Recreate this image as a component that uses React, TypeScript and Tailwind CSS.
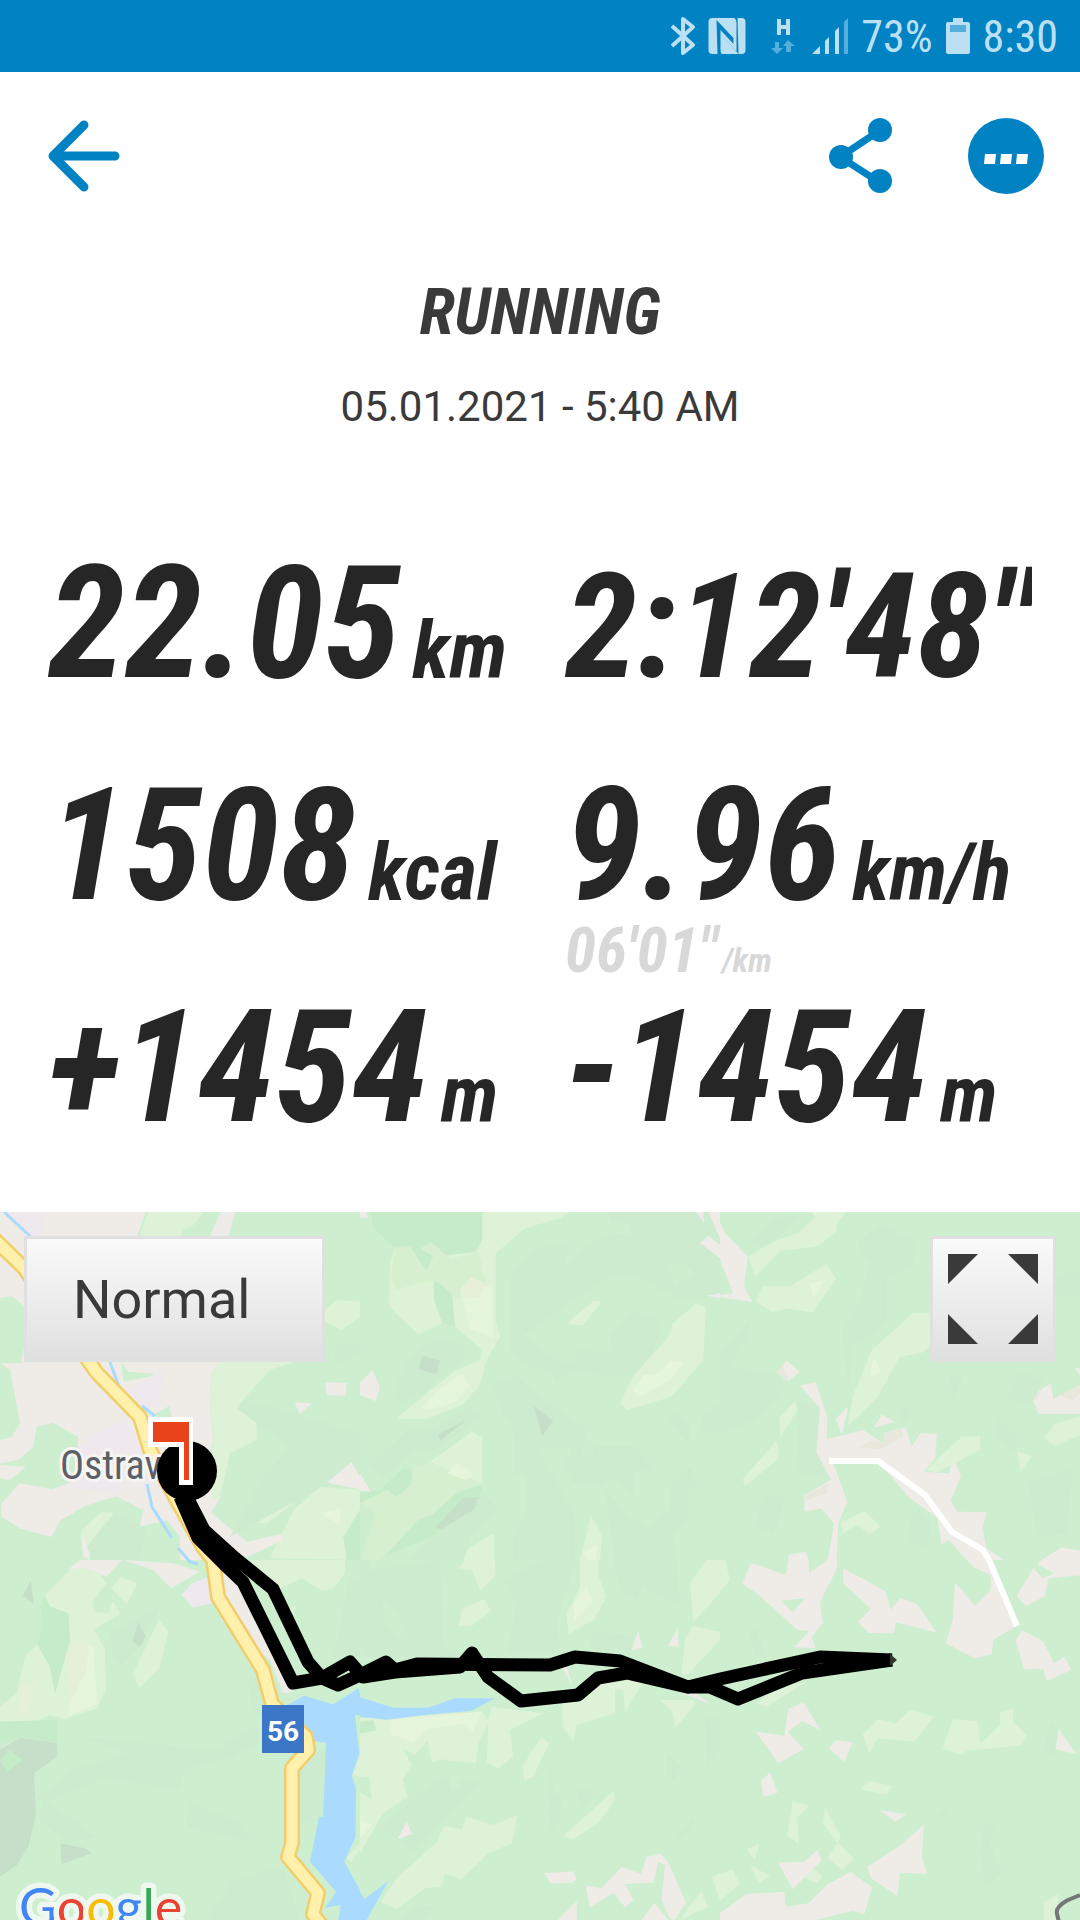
import React from "react";

interface Stat {
  id: string;
  value: string;
  unit?: string;
  small?: boolean;
  pace?: string;
}

const stats: Stat[] = [
  { id: "distance", value: "22.05", unit: "km" },
  { id: "duration", value: "2:12'48\"", small: true },
  { id: "energy", value: "1508", unit: "kcal" },
  { id: "speed", value: "9.96", unit: "km/h", pace: "06'01\"" },
  { id: "ascent", value: "+1454", unit: "m" },
  { id: "descent", value: "-1454", unit: "m" },
];

// Terrain colours of the map tiles
const LIGHT = "#ddf2d6";
const PALE = "#e5f6dd";
const MID = "#d5efcf";
const SHADE = "#cdebce";
const DEEP = "#c5dfc8";
const MINT = "#c6ebc9";
const TOWN = "#efebe7";
const LILAC = "#efe9ee";
const SAND = "#e7e7dc";
const CREAM = "#e6f0d6";
const WATER = "#abdaff";
const WOOD = "#cdefd0";

interface Tile {
  x: number;
  y: number;
  shapes: [string, string][];
}

// Every tile is 1080 units wide and drawn at a third of its size
const tiles: Tile[] = [
  {
    x: 0,
    y: -12,
    shapes: [
      [TOWN, "0,30 440,30 410,110 410,480 660,486 635,520 628,600 640,720 630,760 660,890 560,1080 0,1080"],
      [LIGHT, "445,30 620,30 590,75 550,90 545,110 420,110"],
      [WOOD, "618,30 665,30 630,110 545,110 550,90 580,75"],
      [TOWN, "665,30 708,30 684,110 630,110"],
      [LILAC, "0,36 140,36 125,108 95,110 10,40"],
      [WOOD, "0,295 35,288 75,320 75,430 62,490 0,490"],
      [WOOD, "0,488 30,510 60,670 35,710 0,720"],
      [LIGHT, "975,330 1010,300 1080,305 1080,350 1025,390 975,365"],
      [LIGHT, "660,486 880,486 810,510 710,620 770,660 770,720 690,760 660,890 635,900 635,780 640,700 628,600 635,520"],
      [WOOD, "365,486 385,515 480,523 370,545"],
      [LILAC, "380,570 500,500 470,620 430,620"],
      [LILAC, "225,745 370,655 430,750 340,900 310,935 295,915 350,880 215,865"],
      [WOOD, "435,660 508,618 515,655 470,690"],
      [TOWN, "975,547 1040,549 1037,588 980,585"],
      [TOWN, "884,607 937,610 898,642"],
      [WOOD, "0,790 55,780 100,740 110,680 160,668 235,712 230,760 260,830 150,870 60,850 5,910 5,950 60,985 155,1010 180,960 250,920 310,900 350,890 430,930 420,980 500,960 540,1010 540,1080 0,1080"],
      [TOWN, "0,795 78,800 30,840 0,835"],
      [TOWN, "5,910 60,850 155,868 250,900 220,940 180,960 155,1010 60,985 5,950"],
      [TOWN, "243,1000 265,1010 270,1080 250,1070"],
      [LIGHT, "245,990 305,935 343,940 260,1040"],
      [SHADE, "260,1040 343,940 440,985 420,1080 280,1080"],
      [TOWN, "520,900 585,900 760,1040 720,1080 560,1080"],
      [LIGHT, "760,967 870,885 878,912 800,970"],
      [SHADE, "710,625 735,600 1080,700 1080,820 930,880 690,1010 790,830 870,740"],
      [LIGHT, "810,1075 880,930 960,860 1080,870 1080,1080"],
      [PALE, "958,940 1022,925 1017,972"],
      [MINT, "1080,930 1030,1010 1040,1080 1080,1080"],
      [TOWN, "700,1035 840,1003 850,1020 740,1072"],
      [TOWN, "980,848 1055,785 1080,830 1080,868"],
      [SHADE, "1005,435 1080,428 1080,470 1005,490"],
    ],
  },
  {
    x: 360,
    y: -12,
    shapes: [
      [MINT, "30,30 370,30 365,120 340,160 270,178 205,215 90,130 40,80"],
      [SHADE, "750,30 1080,30 1080,285 960,300 830,230 750,230 630,310 490,405 590,480 640,490 650,445 755,460 750,400 825,330 910,370 860,520 740,530 640,510 585,550 580,515 490,495 450,450 450,240 465,205 520,150 600,125 630,130 610,200 735,100 815,105 810,70 750,65"],
      [LIGHT, "367,30 645,30 600,55 495,85 407,160 407,360 420,410 380,480 357,560 305,615 205,656 108,656 280,515 360,480 367,450 285,380 275,280 220,240 222,300 248,370 175,403 88,320 90,185 107,140 150,140 200,215 220,170 350,155 367,120"],
      [MID, "107,140 150,140 200,215 220,170 182,145 213,125 272,177 355,155 378,250 335,232 300,265 305,295 275,290 220,245 175,250 107,270 93,220"],
      [MINT, "222,240 275,280 285,380 248,370 222,300"],
      [PALE, "300,265 395,260 400,415 328,385 310,310"],
      [CREAM, "300,265 335,230 372,252 360,290 305,297"],
      [PALE, "183,627 240,565 308,520 328,555 290,605 205,630"],
      [SHADE, "95,585 150,470 225,415 310,435 310,475 190,580 120,610"],
      [DEEP, "188,468 240,482 230,522 175,508"],
      [SHADE, "25,800 150,685 210,690 330,620 375,648 220,750 160,755 70,830"],
      [DEEP, "235,702 315,662 240,722"],
      [TOWN, "0,550 37,510 60,560 47,604 0,585"],
      [TOWN, "0,820 33,876 0,872"],
      [LIGHT, "210,785 335,695 367,712 367,852 270,820"],
      [MINT, "0,880 60,870 130,805 155,805 155,850 110,892 80,870 0,910"],
      [MID, "0,910 80,870 110,892 155,850 157,805 210,785 370,852 300,870 215,945 175,960 60,1080 0,1080 47,940"],
      [PALE, "262,820 293,787 342,825 318,840"],
      [MINT, "75,1070 175,960 215,945 290,880 367,852 355,910 340,935 240,1000 140,1040"],
      [DEEP, "225,985 310,895 355,890 340,930 245,988"],
      [SHADE, "140,1080 240,990 340,930 370,880 415,930 330,1010 310,1080"],
      [LIGHT, "310,1080 325,1045 402,1000 402,1080"],
      [SHADE, "395,555 465,525 530,580 680,690 660,780 625,740 530,740 600,860 645,950 645,1080 460,1080 460,1010 500,930 500,830 465,820 460,680 430,650"],
      [DEEP, "522,618 580,662 547,708"],
      [LIGHT, "620,370 700,303 725,305 668,377"],
      [LIGHT, "780,608 820,528 925,410 938,370 1010,310 1037,322 1030,480 935,590 800,630"],
      [PALE, "818,570 850,525 890,522 932,483 972,485 932,540 840,590"],
      [WOOD, "922,197 975,190 1007,225 945,255"],
      [SHADE, "610,800 640,745 700,775 700,738 790,738 830,740 880,805 820,820 820,885 745,830 735,855 640,850"],
      [SHADE, "735,870 800,940 860,985 930,930 930,860 990,800 1015,850 980,880 985,950 940,1010 950,1080 765,1080"],
      [SHADE, "925,665 950,635 990,680 985,730"],
      [SHADE, "1020,690 1030,640 1080,610 1080,700"],
      [LIGHT, "660,1080 693,948 726,1005 720,1080"],
      [PALE, "670,1060 712,1032 708,1080 680,1080"],
      [TOWN, "0,36 18,36 25,54 0,52"],
      [TOWN, "1008,36 1030,36 1032,68"],
      [TOWN, "1045,36 1080,36 1080,115"],
      [TOWN, "1020,130 1045,107 1080,135 1080,175"],
      [TOWN, "1040,287 1080,280 1080,295"],
    ],
  },
  {
    x: 720,
    y: -12,
    shapes: [
      [SHADE, "90,125 160,60 220,40 240,55 190,100 120,140"],
      [SHADE, "410,130 480,70 590,130 580,190 500,240 500,370 400,440 385,560 365,400 420,300 450,190"],
      [LIGHT, "273,36 380,36 350,70 350,95 295,138 180,153 105,232 85,168 160,125 235,98 285,52"],
      [TOWN, "0,65 12,95 83,170 72,260 97,306 0,292 0,285 40,280 0,180"],
      [LIGHT, "108,303 130,258 208,260 318,192 350,237 275,338 205,325 155,337"],
      [PALE, "270,252 317,238 280,293"],
      [LIGHT, "382,680 400,585 455,450 580,338 640,338 640,430 610,457 540,470 470,595"],
      [PALE, "462,470 482,515 448,534"],
      [SHADE, "0,460 90,360 85,410 30,500 160,520 180,600 100,660 0,700"],
      [SHADE, "235,600 300,615 300,760 330,840 230,820"],
      [TOWN, "170,515 200,482 240,515 202,545"],
      [SAND, "170,515 185,495 205,530 202,545"],
      [TOWN, "240,557 287,547 322,650 320,718 430,690 490,730 495,698 558,682 575,740 602,698 651,703 645,775 612,815 687,820 698,765 723,830 692,900 712,935 800,936 787,985 800,1045 850,1080 740,1080 687,1020 665,1033 652,955 565,890 480,790 340,790 382,905 355,970 350,1080 323,1080 342,970 303,925 253,935 253,885 333,840 289,757 300,625"],
      [SAND, "415,742 460,720 488,730 498,698 548,685 548,712 480,748"],
      [SAND, "255,887 325,850 322,878 258,902"],
      [TOWN, "348,655 385,620 365,705"],
      [TOWN, "463,683 485,643 523,665"],
      [LIGHT, "615,812 725,710 780,708 780,750 650,817"],
      [LIGHT, "178,655 224,603 231,632 182,707"],
      [LIGHT, "68,838 170,722 178,775 75,858"],
      [LIGHT, "892,755 935,768 902,814"],
      [LIGHT, "365,965 435,933 482,980 450,1002 410,975 368,1000"],
      [LIGHT, "972,715 1005,670 1080,650 1080,705 1005,737"],
      [TOWN, "932,587 993,550 1000,597 1080,555 1080,642 957,642"],
      [SAND, "935,590 968,565 950,603"],
      [SAND, "1020,588 1080,555 1080,580 1058,603"],
      [TOWN, "1063,503 1080,505 1080,525"],
      [TOWN, "965,1080 1025,1042 1080,1052 1080,1080"],
      [TOWN, "205,1065 258,1055 265,1080 205,1080"],
      [SHADE, "860,590 900,515 970,540 930,620"],
      [SHADE, "828,650 890,710 885,765 830,720"],
      [SHADE, "925,850 1060,800 1040,1000 950,1010"],
      [SHADE, "685,522 728,530 703,600"],
      [SHADE, "570,950 600,930 635,970 620,1050 565,1020"],
      [SHADE, "125,890 200,885 160,1010 110,970"],
      [SHADE, "540,650 555,620 580,638 550,668"],
      [SHADE, "985,240 1050,210 1080,220 1080,290 1010,285"],
    ],
  },
  {
    x: 0,
    y: 348,
    shapes: [
      [LIGHT, "133,105 230,10 280,20 320,70 280,120 280,155 325,160 340,122 360,162 283,207 315,270 318,390 290,445 195,478 150,465 100,490 0,485 0,440 50,400 75,290 112,253 150,320 165,400 210,240 205,160 150,140"],
      [PALE, "235,240 280,260 292,430 205,468 210,360 190,285"],
      [CREAM, "190,285 235,240 265,250 260,330 205,440 210,360"],
      [CREAM, "55,460 60,380 103,365 85,465"],
      [MINT, "120,140 133,110 150,140 205,160 210,240 165,400 150,320 112,253 130,200"],
      [TOWN, "205,28 240,0 365,0 320,50 260,25"],
      [TOWN, "370,0 520,10 600,35 513,85 460,30"],
      [LILAC, "545,105 575,70 625,52 640,130 578,142"],
      [LIGHT, "333,85 362,52 412,70 380,133"],
      [SHADE, "340,300 330,220 480,140 420,260 365,315"],
      [LIGHT, "398,342 478,178 505,215 478,325 418,385"],
      [DEEP, "415,185 437,230 418,262 398,240"],
      [DEEP, "68,108 92,62 102,133"],
      [TOWN, "650,0 750,60 878,395 850,400 810,300 665,180"],
      [LIGHT, "755,0 1035,0 1035,40 1000,85 965,92 905,55 840,85 760,40"],
      [LIGHT, "850,150 893,137 870,170"],
      [SHADE, "1045,50 1080,60 1080,290 990,300 1020,210"],
      [SHADE, "745,350 775,350 790,470 760,460 750,410"],
      [MINT, "0,485 170,480 170,560 60,530 0,600"],
      [SHADE, "0,545 60,530 175,545 175,590 100,640 108,800 60,910 0,950"],
      [DEEP, "0,570 60,533 170,550 170,590 102,640 108,760 85,860 50,915 0,950"],
      [MINT, "0,600 30,570 67,600 20,638"],
      [SHADE, "245,530 640,570 770,500 780,540 700,590 550,630 540,690 320,655 150,720 100,720 220,630 380,580"],
      [SHADE, "135,715 280,830 200,850 110,770"],
      [SHADE, "565,720 720,790 750,845 560,800"],
      [DEEP, "182,850 255,865 275,880 185,912"],
      [SHADE, "700,960 850,920 900,1080 620,1080"],
      [SHADE, "900,620 1000,540 980,780 900,790"],
      [WATER, "845,445 912,407 1000,433 1075,385 1080,400 1080,465 1065,465 1078,580 1055,648 1068,685 1067,830 1033,905 1080,990 1080,1080 1015,1080 1022,1035 975,1043 1008,995 930,905 957,770 970,770 978,548 915,540 905,450"],
      [LIGHT, "1080,590 1058,645 1080,650"],
      [LIGHT, "1080,850 1040,895 1055,905 1080,870"],
    ],
  },
  {
    x: 360,
    y: 348,
    shapes: [
      [SHADE, "30,30 240,0 250,260 330,290 20,290 0,250 0,0 30,0"],
      [SHADE, "430,60 550,0 650,0 590,180 600,280 440,280 470,130"],
      [SHADE, "760,0 950,0 960,140 850,80 830,120 780,100"],
      [SHADE, "700,215 820,225 810,285 690,265"],
      [WOOD, "68,100 150,220 130,250 70,180"],
      [LIGHT, "295,25 315,0 405,0 407,48 362,92 335,30"],
      [LIGHT, "295,198 308,145 373,118 393,153 335,198"],
      [LIGHT, "660,0 715,0 715,45 739,110 703,178 625,224 620,160 660,85"],
      [PALE, "680,80 699,125 642,182 642,132"],
      [LIGHT, "990,70 1040,0 1080,0 1080,100 1000,185"],
      [LIGHT, "998,198 1080,215 1080,240 980,347 965,340 975,240"],
      [TOWN, "833,212 848,262 815,272"],
      [TOWN, "953,203 955,260 925,257"],
      [TOWN, "605,320 620,320 638,378"],
      [TOWN, "965,400 1005,398 1052,433"],
      [LIGHT, "607,430 690,370 860,350 795,455 790,390 765,390 765,460 650,495 640,543 607,498"],
      [LIGHT, "900,420 1005,420 1000,440 947,503 937,455"],
      [LIGHT, "0,475 365,455 385,480 395,440 550,460 448,510 460,590 415,625 380,605 385,490 355,550 348,610 240,598 215,608 203,540 165,585 127,563 155,615 128,658 142,712 68,760 0,880"],
      [PALE, "90,480 365,455 338,515 308,492 200,507 160,545 88,522"],
      [PALE, "0,780 37,792 0,835"],
      [WOOD, "0,650 28,650 35,720 0,695"],
      [MINT, "0,485 40,480 48,512 0,520"],
      [WATER, "0,412 100,443 205,443 285,415 405,415 335,452 195,465 80,479 0,470"],
      [LIGHT, "487,618 545,530 567,550 520,650 493,662"],
      [SHADE, "65,800 230,655 270,650 270,690 300,685 300,655 365,670 290,740 180,860 150,870"],
      [TOWN, "113,837 140,785 158,822"],
      [LIGHT, "62,1025 110,955 228,848 252,797 305,808 320,770 400,795 473,765 455,850 385,880 305,957 255,943 243,980 195,985 108,1048"],
      [WATER, "0,995 12,1018 85,963 20,1080 0,1080"],
      [SHADE, "120,1080 170,1035 225,1040 190,1080"],
      [SHADE, "567,610 585,700 607,710 600,780 585,820 568,810"],
      [SHADE, "648,685 708,690 665,755"],
      [LIGHT, "608,830 760,692 766,720 720,785 640,838"],
      [SHADE, "922,580 963,620 945,662 922,650"],
      [SHADE, "1035,465 1080,480 1080,560 1040,635"],
      [SHADE, "945,830 998,778 1000,800 960,840"],
      [TOWN, "553,940 640,934 650,958 635,968 575,971"],
      [TOWN, "677,977 725,985 785,920 843,942 860,890 903,882 925,908 978,1027 945,1080 930,1075 905,1020 915,915 895,905 880,968 795,972 820,1020 795,1042 760,998 690,1042"],
      [TOWN, "593,1080 650,1023 650,1080"],
      [TOWN, "845,1080 883,1028 925,1080"],
      [LIGHT, "965,1080 985,1040 1025,995 1045,1042 1000,1060"],
      [LIGHT, "1055,950 1080,940 1080,1020"],
    ],
  },
  {
    x: 720,
    y: 348,
    shapes: [
      [LIGHT, "0,0 15,0 30,60 0,95"],
      [TOWN, "67,72 93,8 197,45 205,0 265,0 268,40 320,0 352,0 350,28 300,125 309,190 275,230 287,265 222,262 268,212 232,210 115,103"],
      [WOOD, "180,122 254,115 220,157"],
      [TOWN, "369,25 495,92 513,150 540,113 592,133 650,218 527,187 522,220 445,219 413,185 453,147 370,70"],
      [TOWN, "740,0 800,0 885,200 820,240 815,283 765,295 677,250 699,178 705,67 765,137 812,90 812,45 760,20"],
      [TOWN, "890,108 940,25 968,55 1003,40 952,12 965,0 1080,0 1080,46 985,55 975,108 918,138"],
      [TOWN, "887,240 907,210 970,245 1002,310 1033,290 1054,330 980,363 970,327 912,328"],
      [LIGHT, "112,430 180,375 255,368 140,440"],
      [TOWN, "205,448 250,427 302,511 246,483 203,515 251,567 175,610 107,515 193,527"],
      [TOWN, "326,564 347,540 397,547 374,605"],
      [TOWN, "123,660 150,638 173,698 130,711"],
      [LIGHT, "428,523 475,478 528,490 570,450 642,470 583,545 472,535 448,582"],
      [LIGHT, "667,565 700,478 772,483 782,550 840,495 840,458 879,445 880,485 920,525 900,557 740,572 725,584"],
      [TOWN, "1016,508 1070,583 1007,568"],
      [SHADE, "965,570 997,485 1012,505 1003,585"],
      [LIGHT, "422,688 448,662 515,678 500,704"],
      [TOWN, "480,751 559,762 527,786"],
      [LIGHT, "217,724 268,737 231,775 237,850 202,828"],
      [LIGHT, "315,743 362,830 355,850 402,895 368,930 322,895 352,848 308,790"],
      [LIGHT, "82,868 118,850 104,902"],
      [LIGHT, "90,915 150,948 117,970"],
      [LIGHT, "252,952 280,925 308,950 290,970"],
      [LIGHT, "0,942 38,928 58,972 0,1022"],
      [TOWN, "175,908 252,905 292,870 305,902 218,988"],
      [TOWN, "442,920 535,860 612,793 605,890 622,942 540,938 532,1008 453,955"],
      [TOWN, "0,1060 78,1003 193,995 197,1040 265,1030 323,973 392,936 456,982 433,1063 400,1052 285,1080 0,1080"],
      [LIGHT, "972,1025 1015,1003 1010,1080 972,1080"],
      [SHADE, "790,800 830,785 810,850 848,935 795,990 782,870"],
      [SHADE, "657,765 693,725 677,778"],
      [SHADE, "85,220 105,205 137,285 110,300"],
    ],
  },
];

const road =
  "-8,25 24,56 90,151 97,161 140,205 150,238 175,285 203,335 213,348 218,385 263,458 272,492 306,525 308,538 292,556 292,631 288,645 318,681 313,702 322,714";
const trackOut =
  "187,285 204,318 235,346 273,377 308,450 322,466 338,473 360,463 386,450 395,458 417,452 550,453 575,445 620,449 688,475 720,467 820,445 892,448";
const trackBack =
  "180,285 198,326 224,352 243,370 293,471 322,466 350,450 363,465 395,460 460,455 472,441 488,465 521,489 578,483 598,466 627,461 687,475 710,475 738,487 802,461 892,448";

function StatusBar() {
  return (
    <div className="h-[72px] bg-[#0082c3] text-[#bce0f3] flex items-center justify-end gap-[13px] pl-6 pr-[22px] font-['Roboto_Condensed','Liberation_Sans_Narrow',sans-serif]">
      {/* Bluetooth */}
      <svg className="w-6 h-10" viewBox="0 0 24 40" fill="none" stroke="currentColor" strokeWidth="4" strokeLinejoin="round">
        <path d="M1 10 L22 29 L12 37 V3 L22 11 L1 30" />
      </svg>
      {/* NFC */}
      <svg className="w-[38px] h-9" viewBox="0 0 37 36">
        <rect width="37" height="36" rx="4" fill="currentColor" />
        <path d="M8 2 L25 20 V26 L12 12 V31 Q12 34 13 36 H9 Z M12 15 L28 34 V5 Q28 2 26 0 H29 L30 36 Z" fill="#0082c3" />
      </svg>
      <svg className="w-6 h-9 ml-3 mr-1" viewBox="0 0 24 36">
        <path d="M6 1 H10 V7 H15 V1 H19 V17 H15 V11 H10 V17 H6 Z" fill="currentColor" />
        <path d="M4 24 H8 V30 H12 L6 36 L0 30 H4 Z M15 34 H20 V28 H24 L17 22 L12 28 H15 Z" fill="#54afdc" />
      </svg>
      {/* Signal */}
      <svg className="w-9 h-9" viewBox="0 0 36 36" fill="currentColor">
        <path d="M0 36 L8 28 V36 Z M13 23 L17 19 V36 H13 Z M23 13 L27 9 V36 H23 Z" />
        <path d="M32 4 L36 0 V36 H32 Z" fill="#54afdc" />
      </svg>
      <span className="text-[44px] leading-none pt-px">73%</span>
      <svg className="w-6 h-9" viewBox="0 0 24 36">
        <path d="M7 0 H17 V4 H22 Q24 4 24 6 V34 Q24 36 22 36 H2 Q0 36 0 34 V6 Q0 4 2 4 H7 Z" fill="currentColor" />
        <rect x="4" y="7" width="16" height="7" fill="#54afdc" />
      </svg>
      <span className="text-[44px] leading-none pt-px">8:30</span>
    </div>
  );
}

function TopBar() {
  return (
    <header className="h-[168px] flex items-center justify-between pl-12 pr-9 text-[#0082c3]">
      <button type="button" aria-label="Back">
        <svg className="w-[72px] h-[72px]" viewBox="0 0 72 72" fill="none" stroke="currentColor" strokeWidth="9" strokeLinecap="round" strokeLinejoin="round">
          <path d="M36 5 L5 36 L36 67 M5 36 H67" />
        </svg>
      </button>
      <div className="flex items-center gap-[76px]">
        <button type="button" aria-label="Share">
          <svg className="w-16 h-[76px]" viewBox="0 0 64 76" fill="currentColor">
            <path d="M51 13 L12 39 L51 64" fill="none" stroke="currentColor" strokeWidth="7" />
            <circle cx="52" cy="12" r="12" />
            <circle cx="13" cy="39" r="12" />
            <circle cx="52" cy="63" r="12" />
          </svg>
        </button>
        <button type="button" aria-label="More options">
          <svg className="w-[76px] h-[76px]" viewBox="0 0 76 76">
            <circle cx="38" cy="38" r="38" fill="currentColor" />
            <path d="M17 36 H28 L27 46 H16 Z M33 36 H44 L43 46 H32 Z M49 36 H60 L59 46 H48 Z" fill="#fff" />
          </svg>
        </button>
      </div>
    </header>
  );
}

function StatCell({ stat }: { stat: Stat }) {
  return (
    <div className="h-[222px] overflow-x-clip whitespace-nowrap font-bold italic">
      <p className={stat.small ? "text-[147px] leading-[174px]" : "flex items-baseline gap-3 text-[157px] leading-[166px]"}>
        <span>{stat.value}</span>
        {stat.unit && <span className="text-[80px] leading-none">{stat.unit}</span>}
      </p>
      {stat.pace && (
        <p className="flex items-baseline gap-1 text-[63px] leading-[46px] text-[#d8d8d8]">
          <span>{stat.pace}</span>
          <span className="text-[33px] leading-none">/km</span>
        </p>
      )}
    </div>
  );
}

function RouteMap() {
  return (
    <section className="relative flex-1 min-h-[640px] overflow-hidden bg-[#cdefd0]">
      <svg className="absolute inset-0 w-full h-full" viewBox="0 0 1080 708" preserveAspectRatio="xMidYMin slice" role="img" aria-label="Route map">
        {tiles.map((tile) => (
          <g key={`${tile.x}-${tile.y}`} transform={`translate(${tile.x} ${tile.y}) scale(0.33334)`}>
            {tile.shapes.map(([fill, points], i) => (
              <polygon key={i} fill={fill} points={points} />
            ))}
          </g>
        ))}

        {/* River */}
        <path d="M4 0 L30 24 M110 150 L119 175 M142 194 L155 204 M147 272 L152 295 L172 326 M178 336 L190 350 L198 352" fill="none" stroke="#abdaff" strokeWidth="3" />

        {/* Roads */}
        <g fill="none" strokeLinejoin="round">
          <polyline points={road} stroke="#f2cd6b" strokeWidth="16" />
          <polyline points={road} stroke="#fff0ab" strokeWidth="11" />
          <polyline points="829,249 878,249 925,283 952,320 983,338 990,350 1017,414" stroke="#fff" strokeWidth="6" />
          <path d="M1080 683 L1068 688 Q1055 695 1057 702 L1059 710" stroke="#777" strokeWidth="4" />
        </g>
        <rect x="262" y="493" width="42" height="48" fill="#3b77c6" />
        <text x="283" y="529" textAnchor="middle" className="text-[28px] font-bold font-[Roboto,sans-serif]" fill="#fff">
          56
        </text>
        <text x="60" y="267" className="text-[40px] font-['Roboto_Condensed','Liberation_Sans_Narrow',sans-serif]" fill="#5b6066" stroke="#f6f5f3" strokeWidth="6" strokeLinejoin="round" paintOrder="stroke">
          Ostrav
        </text>

        {/* Recorded track */}
        <g fill="none" stroke="#000" strokeWidth="13" strokeLinejoin="round">
          <polyline points={trackOut} />
          <polyline points={trackBack} />
        </g>
        <path d="M890 442 L897 448 L890 454 Z" fill="#333" />
        <circle cx="187" cy="259" r="30" />
        <path d="M148 205 H193 V273 H179 V235 H148 Z" fill="#fff" />
        <path d="M153 210 H189 V268 H184 V230 H153 Z" fill="#e8431a" />

        <text x="19" y="714" className="text-[52px] font-[Lato,sans-serif]" stroke="#eef8ee" strokeWidth="11" strokeLinejoin="round" paintOrder="stroke">
          <tspan fill="#4285f4">G</tspan>
          <tspan fill="#ea4335">o</tspan>
          <tspan fill="#fbbc05">o</tspan>
          <tspan fill="#4285f4">g</tspan>
          <tspan fill="#34a853">l</tspan>
          <tspan fill="#ea4335">e</tspan>
        </text>
      </svg>

      <div className="relative flex justify-between p-6">
        <select
          aria-label="Map type"
          defaultValue="normal"
          className="appearance-none w-[301px] h-[126px] pl-[46px] text-[54px] text-[#3a3a3a] bg-linear-to-b from-[#fafafa] to-[#e0e0e0] border-3 border-[#e0e0e0] rounded-none"
        >
          <option value="normal">Normal</option>
          <option value="satellite">Satellite</option>
        </select>
        <button
          type="button"
          aria-label="Full screen"
          className="w-[126px] h-[126px] flex items-center justify-center bg-linear-to-b from-[#fafafa] to-[#e0e0e0] border-3 border-[#e0e0e0]"
        >
          <svg className="w-[90px] h-[90px]" viewBox="0 0 90 90" fill="#3a3a3a">
            <path d="M0 0 H30 L0 30 Z M60 0 H90 V30 Z M0 60 L30 90 H0 Z M90 60 V90 H60 Z" />
          </svg>
        </button>
      </div>
    </section>
  );
}

export default function App() {
  return (
    <div className="min-h-screen flex flex-col bg-white font-[Roboto,sans-serif]">
      <StatusBar />
      <TopBar />

      <main className="flex-1 flex flex-col">
        <div className="text-center text-[#3a3a3a] pt-[34px]">
          <h1 className="text-[65px] leading-[76px] font-bold italic font-['Roboto_Condensed','Liberation_Sans_Narrow',sans-serif]">RUNNING</h1>
          <p className="mt-8 text-[42px] leading-[50px]">05.01.2021 - 5:40 AM</p>
        </div>

        <div className="grid grid-cols-[minmax(0,517fr)_minmax(0,467fr)] px-12 pt-[108px] pb-[6px] text-[#262626] font-['Roboto_Condensed','Liberation_Sans_Narrow',sans-serif]">
          {stats.map((stat) => (
            <StatCell key={stat.id} stat={stat} />
          ))}
        </div>

        <RouteMap />
      </main>
    </div>
  );
}
